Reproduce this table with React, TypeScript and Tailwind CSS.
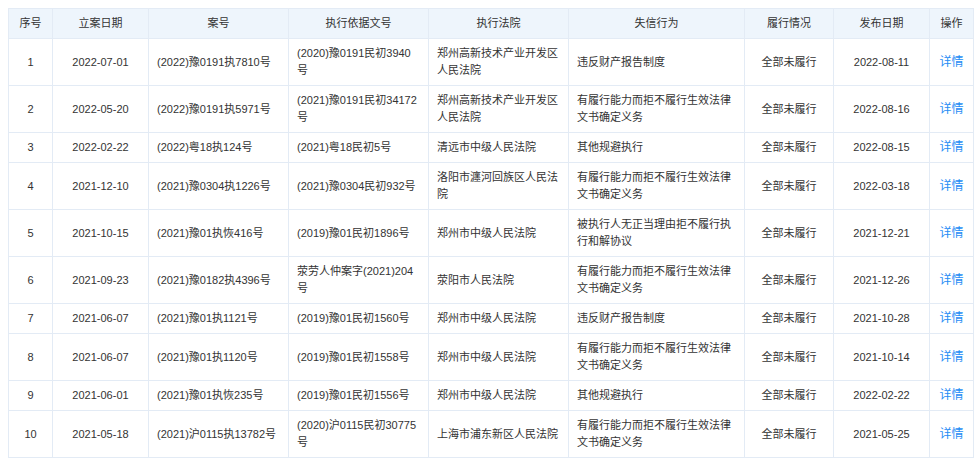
import React from 'react';

type Row = {
  filed: string;
  caseNo: string;
  basis: string;
  court: string;
  behavior: string;
  status: string;
  published: string;
};

const FULFIL = '有履行能力而拒不履行生效法律文书确定义务';

const rows: Row[] = [
  { filed: '2022-07-01', caseNo: '(2022)豫0191执7810号', basis: '(2020)豫0191民初3940号', court: '郑州高新技术产业开发区人民法院', behavior: '违反财产报告制度', status: '全部未履行', published: '2022-08-11' },
  { filed: '2022-05-20', caseNo: '(2022)豫0191执5971号', basis: '(2021)豫0191民初34172号', court: '郑州高新技术产业开发区人民法院', behavior: FULFIL, status: '全部未履行', published: '2022-08-16' },
  { filed: '2022-02-22', caseNo: '(2022)粤18执124号', basis: '(2021)粤18民初5号', court: '清远市中级人民法院', behavior: '其他规避执行', status: '全部未履行', published: '2022-08-15' },
  { filed: '2021-12-10', caseNo: '(2021)豫0304执1226号', basis: '(2021)豫0304民初932号', court: '洛阳市瀍河回族区人民法院', behavior: FULFIL, status: '全部未履行', published: '2022-03-18' },
  { filed: '2021-10-15', caseNo: '(2021)豫01执恢416号', basis: '(2019)豫01民初1896号', court: '郑州市中级人民法院', behavior: '被执行人无正当理由拒不履行执行和解协议', status: '全部未履行', published: '2021-12-21' },
  { filed: '2021-09-23', caseNo: '(2021)豫0182执4396号', basis: '荥劳人仲案字(2021)204号', court: '荥阳市人民法院', behavior: FULFIL, status: '全部未履行', published: '2021-12-26' },
  { filed: '2021-06-07', caseNo: '(2021)豫01执1121号', basis: '(2019)豫01民初1560号', court: '郑州市中级人民法院', behavior: '违反财产报告制度', status: '全部未履行', published: '2021-10-28' },
  { filed: '2021-06-07', caseNo: '(2021)豫01执1120号', basis: '(2019)豫01民初1558号', court: '郑州市中级人民法院', behavior: FULFIL, status: '全部未履行', published: '2021-10-14' },
  { filed: '2021-06-01', caseNo: '(2021)豫01执恢235号', basis: '(2019)豫01民初1556号', court: '郑州市中级人民法院', behavior: '其他规避执行', status: '全部未履行', published: '2022-02-22' },
  { filed: '2021-05-18', caseNo: '(2021)沪0115执13782号', basis: '(2020)沪0115民初30775号', court: '上海市浦东新区人民法院', behavior: FULFIL, status: '全部未履行', published: '2021-05-25' },
];

const headers = ['序号', '立案日期', '案号', '执行依据文号', '执行法院', '失信行为', '履行情况', '发布日期', '操作'];
const widths = [44, 96, 140, 140, 140, 176, 89, 96, 44];

export default function App() {
  const cell = 'border border-[#e3ebf5] px-2 py-[6px] align-middle';
  return (
    <div
      className="bg-white p-2 text-[11px] leading-[17px] text-[#333]"
      style={{ fontFamily: '"Liberation Sans", "Noto Sans CJK SC", sans-serif' }}
    >
      <table className="table-fixed border-collapse w-[965px]">
        <colgroup>
          {widths.map((w, i) => (
            <col key={i} style={{ width: w }} />
          ))}
        </colgroup>
        <thead>
          <tr className="bg-[#eef5fc]">
            {headers.map((h) => (
              <th key={h} className={`${cell} font-normal text-center`}>
                {h}
              </th>
            ))}
          </tr>
        </thead>
        <tbody>
          {rows.map((r, i) => (
            <tr key={i}>
              <td className={`${cell} text-center`}>{i + 1}</td>
              <td className={`${cell} text-center`}>{r.filed}</td>
              <td className={`${cell} text-left`}>{r.caseNo}</td>
              <td className={`${cell} text-left`}>{r.basis}</td>
              <td className={`${cell} text-left`}>{r.court}</td>
              <td className={`${cell} text-left`}>{r.behavior}</td>
              <td className={`${cell} text-center`}>{r.status}</td>
              <td className={`${cell} text-center`}>{r.published}</td>
              <td className={`${cell} text-center`}>
                <a className="text-[#1e8cf5] cursor-pointer text-[12px]">详情</a>
              </td>
            </tr>
          ))}
        </tbody>
      </table>
    </div>
  );
}
